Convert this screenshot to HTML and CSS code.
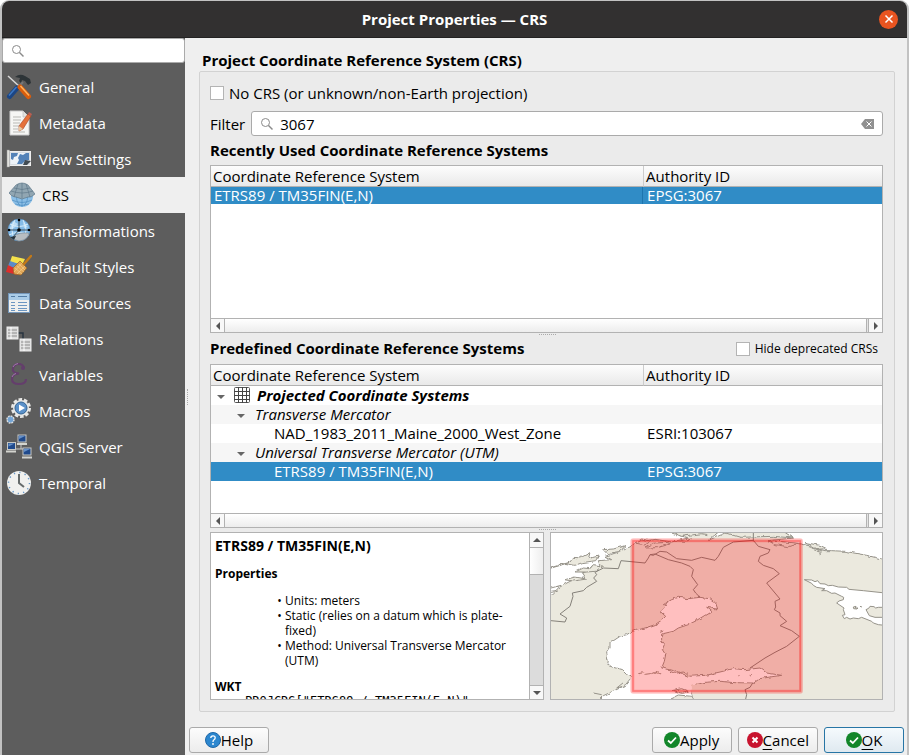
FILE: index.html
```html
<!DOCTYPE html>
<html lang="en">
<head>
<meta charset="utf-8">
<title>Project Properties — CRS</title>
<link rel="stylesheet" href="styles.css">
</head>
<body>
<div class="window">
  <header class="titlebar">
    <h1>Project Properties — CRS</h1>
    <button class="close" aria-label="Close"><svg width="10" height="10" viewBox="0 0 10 10"><path d="M1.500 1.500l7 7M8.500 1.500l-7 7" stroke="#fff" stroke-width="1.500"/></svg></button>
  </header>
  <div class="body">
    <aside class="sidebar">
      <div class="side-search">
        <svg width="14" height="14" viewBox="0 0 14 14" fill="none" stroke="#8a8a8a"><circle cx="5.500" cy="5.500" r="4"/><path d="M8.500 8.500l4 4" stroke-width="1.500"/></svg>
        <input type="text" aria-label="Search options">
      </div>
      <nav>
        <a href="#general"><svg class="icon" viewBox="0 0 26 26"><path d="M2 2l12 11" stroke="#d8d8d8" stroke-width="1.500"/><path d="M9 3q5-4 10-1l5 3 1 4-3 2-3-4-3-1-1 3-2-2 1-3z" fill="#2d3437"/><path d="M17 8L11 15" stroke="#777" stroke-width="2"/><path d="M11 14L3.500 22.500" stroke="#1c4685" stroke-width="5" stroke-linecap="round"/><path d="M10.500 13L3 21.500" stroke="#3d78c4" stroke-width="1.500"/><path d="M14 13l8.500 9.500" stroke="#d95d0c" stroke-width="5" stroke-linecap="round"/><path d="M14.500 12l8.500 9.500" stroke="#ffb35c" stroke-width="1.500"/></svg>General</a>
        <a href="#metadata"><svg class="icon" viewBox="0 0 26 26"><path d="M4 1h13l6 6v18H4z" fill="#f6f6f4" stroke="#ccc"/><path d="M17 1v6h6" fill="#e2e2de" stroke="#bbb" stroke-width=".6"/><path d="M7 7h8M7 10h8M7 13h7M7 16h6M7 19h5M7 22h12" stroke="#b9b9b5"/><path d="M22 4l3 2-8 13-4 2 0-5z" fill="#e5713a" stroke="#a8411e" stroke-width=".6"/><path d="M13 16v5l4-2z" fill="#e7c9a0"/><path d="M22 4l1-2 3 2-1 2z" fill="#b95f54"/></svg>Metadata</a>
        <a href="#view"><svg class="icon" viewBox="0 0 26 26"><rect x="2.500" y="5.500" width="22" height="14" fill="#d8dde2" stroke="#eee"/><rect x="4.500" y="7" width="18.500" height="11" fill="#eef3f8"/><path d="M5 7h7l-1 3-3 1-1 3-2-1zM14 8l3 1 3-2h3v7l-4 1-3 3-5 0 2-4-1-2z" fill="#5382b8"/><path d="M17 19l2-5 6 1-4 4z" fill="#424b52"/><rect x="1" y="4" width="2.500" height="17" fill="#e2e2de" stroke="#999" stroke-width=".5"/></svg>View Settings</a>
        <a href="#crs" class="selected" aria-current="page"><svg class="icon" viewBox="0 0 26 26"><circle cx="13" cy="14" r="11" fill="#8cbfe6"/><path d="M3 18q10 5 20 0M6 22q7 3 14 0M13 11v14M7 12q0 8 4 12M19 12q0 8-4 12" fill="none" stroke="#4f8ec2" stroke-width=".7"/><path d="M7 3q6-4 12 0l7 9q-4 4-7 3l-6 2-6-2-1 0q-4-1-6-4z" fill="#91a6b2" stroke="#60798a" stroke-width=".7"/><path d="M2 9q11 4 22 0M5 6q8 3 16 0M13 1v15M9 2l-4 13M17 2l4 13" fill="none" stroke="#60798a" stroke-width=".7"/></svg>CRS</a>
        <a href="#transformations"><svg class="icon" viewBox="0 0 26 26"><circle cx="13" cy="12" r="11" fill="#85bce8" stroke="#568fc2" stroke-width=".6"/><path d="M7 3l5 3-4 4-5 2zM17 4l5 5-4 1z" fill="#bdddf5"/><path d="M4 6q9 5 18 0M3 17q9-5 20 0M9 2q-6 10 0 20M17 2q6 10 0 20" fill="none" stroke="#d8edfb"/><path d="M13 1v11M2 12h21M13 12l-6 7" stroke="#26333b" stroke-width=".8"/><circle cx="13" cy="12" r="1.800"/><circle cx="13" cy="2" r="1.300"/><circle cx="23" cy="12" r="1.300"/><circle cx="3" cy="12" r="1.300"/><path d="M7 21q1-6 12-6l4 0q-1 7-10 8z" fill="#b8bec2" stroke="#747d82" stroke-width=".5"/><path d="M4 19l6-1-2 4z" fill="#24313a"/></svg>Transformations</a>
        <a href="#styles"><svg class="icon" viewBox="0 0 26 26"><path d="M6 2l13 3-3 6-12-3z" fill="#f4e14b"/><path d="M4 7l12 4-3 5-11-4z" fill="#5b8bc7"/><path d="M2 11l8 4 2 6-12-3z" fill="#dd2e2b"/><path d="M7 14l7-7 7 7-6 7-7-1z" fill="#e0a555" stroke="#9d6420" stroke-width=".7"/><path d="M9 14l7 6M11 12l7 6M13 10l6 6M8 18l8-9M11 20l8-8" stroke="#f4cd8b" stroke-width=".7"/><path d="M18 10l7-8" stroke="#c27918" stroke-width="2.500" stroke-linecap="round"/></svg>Default Styles</a>
        <a href="#sources"><svg class="icon" viewBox="0 0 26 26"><rect x="2.500" y="3.500" width="21" height="19" fill="#f0f0ee" stroke="#7596b8"/><rect x="3" y="4" width="20" height="6" fill="#a9cce8"/><path d="M5 6.500h4M12 6.500h9" stroke="#527ca5"/><path d="M5 12.500h4M12 12.500h9M5 15.500h4M12 15.500h9M5 18.500h4M12 18.500h9M5 20.500h4M12 20.500h9" stroke="#6c96c2"/></svg>Data Sources</a>
        <a href="#relations"><svg class="icon" viewBox="0 0 26 26"><path d="M12 7h5v7" fill="none" stroke="#293440" stroke-width="1.500"/><rect x="1" y="1" width="11" height="12" fill="#ddd" stroke="#eee"/><rect x="14" y="13" width="11" height="12" fill="#ddd" stroke="#eee"/><path d="M2 4h9M2 7h9M2 10h9M15 16h9M15 19h9M15 22h9" stroke="#8c8c8c"/><path d="M5 1v12M18 13v12" stroke="#fff"/></svg>Relations</a>
        <a href="#variables"><svg class="icon" viewBox="0 0 26 26"><path d="M18 6q-1-4-5.500-4T7 6.500t6 5q-7 .5-7 5.500t7 5 7-5" fill="none" stroke="#643e6c" stroke-width="2.200"/><path d="M7 5q1-3 5-3.500M6 15q1-3 4-3.500" stroke="#a179ab" fill="none"/><circle cx="17" cy="6" r="2" fill="#643e6c"/></svg>Variables</a>
        <a href="#macros"><svg class="icon" viewBox="0 0 26 26"><circle cx="15" cy="10" r="8.500" fill="none" stroke="#e8e8e6" stroke-width="3" stroke-dasharray="3.500 1.840"/><circle cx="15" cy="10" r="8" fill="#e8e8e6"/><circle cx="15" cy="10" r="6" fill="#5b91c9" stroke="#316394"/><path d="M13 6.500v7l6-3.500z" fill="#fff"/><circle cx="4.500" cy="21.500" r="3.500" fill="#74a5d5" stroke="#ddd" stroke-width="1.500" stroke-dasharray="1.800 .9"/></svg>Macros</a>
        <a href="#server"><svg class="icon" viewBox="0 0 26 26"><path d="M15 10v5M9 15h10" stroke="#ccc"/><g stroke="#c7c8c4" fill="#204a8c"><rect x="12" y="1" width="8" height="7"/><rect x="1.500" y="8.500" width="8" height="7"/><rect x="17" y="14" width="8" height="7"/></g><path d="M11 10h10M0 17.500h10M16 23.500h10" stroke="#d3d4cf" stroke-width="2"/><path d="M13 2h6l-6 3zM2.500 9.500h6l-6 3zM18 15h6l-6 3z" fill="#6590c8"/></svg>QGIS Server</a>
        <a href="#temporal"><svg class="icon" viewBox="0 0 26 26"><circle cx="13" cy="13" r="12" fill="#f1f1ef"/><circle cx="13" cy="13" r="10.500" fill="none" stroke="#6294c6" stroke-width="1.500" stroke-dasharray="1.200 4.300"/><path d="M13 4v9l5 4" fill="none" stroke="#666b6b" stroke-width="2"/></svg>Temporal</a>
      </nav>
    </aside>
    <div class="side-grip"></div>
    <main>
      <h2>Project Coordinate Reference System (CRS)</h2>
      <section class="group">
        <label class="check"><input type="checkbox">No CRS (or unknown/non-Earth projection)</label>
        <div class="filter">
          <label for="filter">Filter</label>
          <div class="filter-box">
            <svg width="14" height="14" viewBox="0 0 14 14" fill="none" stroke="#8a8a8a"><circle cx="5.500" cy="5.500" r="4"/><path d="M8.500 8.500l4 4" stroke-width="1.500"/></svg>
            <input id="filter" type="text" value="3067">
            <button aria-label="Clear filter"><svg width="13" height="10" viewBox="0 0 13 10"><path d="M4 0h9v10H4L0 5z" fill="#909090"/><path d="M5.500 2.500l5 5M10.500 2.500l-5 5" stroke="#fff"/></svg></button>
          </div>
        </div>
        <h3>Recently Used Coordinate Reference Systems</h3>
        <div class="list recent">
          <table>
            <colgroup><col class="name-col"><col></colgroup>
            <thead><tr><th>Coordinate Reference System</th><th>Authority ID</th></tr></thead>
            <tbody class="short"><tr class="active"><td>ETRS89 / TM35FIN(E,N)</td><td>EPSG:3067</td></tr></tbody>
          </table>
          <div class="hscroll"><i class="left"></i><i class="thumb"></i><i class="right"></i></div>
        </div>
        <div class="split-row">
          <h3>Predefined Coordinate Reference Systems</h3>
          <label class="check small"><input type="checkbox">Hide deprecated CRSs</label>
        </div>
        <div class="list">
          <table class="tree">
            <colgroup><col class="name-col"><col></colgroup>
            <thead><tr><th>Coordinate Reference System</th><th>Authority ID</th></tr></thead>
            <tbody>
              <tr><td class="root"><i class="arrow"></i><svg width="16" height="16" viewBox="0 0 16 16"><rect x=".5" y=".5" width="15" height="15" rx="1" fill="#fff" stroke="#555"/><path d="M4.500 0v16M8.500 0v16M12.500 0v16M0 4.500h16M0 8.500h16M0 12.500h16" stroke="#444"/></svg>Projected Coordinate Systems</td><td></td></tr>
              <tr><td class="branch"><i class="arrow"></i>Transverse Mercator</td><td></td></tr>
              <tr><td class="leaf">NAD_1983_2011_Maine_2000_West_Zone</td><td>ESRI:103067</td></tr>
              <tr><td class="branch"><i class="arrow"></i>Universal Transverse Mercator (UTM)</td><td></td></tr>
              <tr class="active"><td class="leaf">ETRS89 / TM35FIN(E,N)</td><td>EPSG:3067</td></tr>
            </tbody>
          </table>
          <div class="hscroll"><i class="left"></i><i class="thumb"></i><i class="right"></i></div>
        </div>
        <div class="details">
          <div class="info">
            <div class="info-text">
              <h4>ETRS89 / TM35FIN(E,N)</h4>
              <h5>Properties</h5>
              <ul>
                <li>Units: meters</li>
                <li>Static (relies on a datum which is plate-fixed)</li>
                <li>Method: Universal Transverse Mercator (UTM)</li>
              </ul>
              <h5 class="wkt">WKT</h5>
              <pre>PROJCRS["ETRS89 / TM35FIN(E,N)",</pre>
            </div>
            <div class="vscroll"><i class="up"></i><i class="vthumb"></i><i class="down"></i></div>
          </div>
          <svg class="map" viewBox="18 15 993 498" preserveAspectRatio="none" role="img" aria-label="Extent of the selected system">
            <defs><filter id="rough" x="-5%" y="-5%" width="110%" height="110%"><feTurbulence type="fractalNoise" baseFrequency=".06" numOctaves="2" seed="4"/><feDisplacementMap in="SourceGraphic" scale="11" xChannelSelector="R" yChannelSelector="G"/></filter></defs>
            <rect x="18" y="15" width="993" height="498" fill="#ebe9de"/>
            <g fill="#fff" stroke="#96938a" stroke-width="3" stroke-linejoin="round">
              <g filter="url(#rough)">
                <path d="M-20-20H400L395 20 430 30 380 42 330 34 290 40 262 50 235 64 215 74 180 85 200 95 160 98 165 112 140 115 128 130 110 135 120 150 85 155 60 168 40 180 18 203-20 210z"/>
                <path d="M490 37L530 20 548 10 625 8 630 20 720 15 745 30 670 38 770 48 800 55 815 62 840 68 860 68 900 70 965 82 1030 98V-20H560z"/>
                <path d="M262 448L245 440 230 425 205 418 188 412 190 400 185 375 195 360 195 345 225 325 245 320 262 310 300 300 330 290 352 275 362 265 345 250 365 232 355 230 380 215 400 208 430 212 465 208 495 212 512 225 518 243 485 238 500 250 480 262 450 280 430 290 400 300 385 310 350 318 350 340 358 350 352 365 362 380 358 400 350 420 375 425 400 432 430 445 480 442 525 432 565 422 600 425 645 420 665 435 710 442 675 447 645 452 625 465 570 464 525 460 480 463 445 472 440 495 450 530H150L175 503 210 487 245 470z"/>
              </g>
              <path d="M778 155L800 156 810 161 818 158 825 167 840 168 850 173 862 172 880 177 905 178 912 184 955 188 1030 196V293L1000 290 985 285 980 280 950 268 940 272 925 270 915 273 905 268 898 272 892 262 900 260 895 245 897 240 875 225 882 219 895 215 896 208 890 205 870 195 860 196 845 188 830 188 840 182 815 178 805 172 800 166z"/>
              <path d="M963 245l8-4 4-6 12 1 5 4 8-2h20v30h-30l-17-5zM925 237l8-2-2 5 8 0-3 3-10-1zM945 235l6 2" fill="#ebe9de"/>
              <g fill="#ebe9de" filter="url(#rough)">
                <path d="M10 122l30-8 35-12 10-14 20 2 30-16-5 18 30-8-8 14-40 6-22 8-30-6-20 6z"/>
                <path d="M90 132l25-12 20 2 10-12 28 4-22 16-26 2zM60 155l30-8 35 6-40 6zM175 65l30-2 35-10-20 18-34 6z"/>
                <path d="M380 15l30 10 60-8 20 3M385 487l25-5 20 8-20 6zM375 513l25-12 40 4 10 20h-70z"/>
                <path d="M440 470l50-4 80 2 55-1-24 18 5 15-4 30H450l-8-30z" stroke="none"/>
                <path d="M525 10l60 18 100-3 60 5-30-20z"/>
                <path d="M280 437l14-3 10 5 14-2M322 437l10-4 14 5M375 430l15 6 25-4 14 7M345 313l10-4M580 440l4 2M614 442l4 2"/>
                <path d="M670 38l40 3 50 5-30 10-40-6zM780 44l45 8 20 10-30 2zM800 60l30 10-8 12"/>
                <path d="M270 45l20-12 28 6-18 12zM300 60l25-14 35-3 18 4-40 12zM390 38l30 2 20-8"/>
                <path d="M145 495l25 5M235 464l-20 16 25-7M18 180l30-8M18 190l20-3"/>
              </g>
            </g>
            <g fill="none" stroke="#85817a" stroke-width="3" stroke-linejoin="round">
              <path d="M18 278L60 282 65 270 45 258 75 235 84 205 82 195 115 188 125 178 155 160 146 150 155 140 150 133 175 120 220 122 228 98 300 105 310 90 315 80 330 78 370 95 410 105 435 115 445 125 440 145 458 170 445 185 452 195 465 208"/>
              <path d="M315 80L325 82 345 70 365 72 395 92 440 97 470 88 510 97 520 85 535 58 565 42 625 37 640 55 675 65 670 75 645 85 640 100 655 112 685 122 703 137 665 165 705 213 690 220 692 237 688 245 705 255 705 263 725 280 705 293 740 308 763 325 725 355 690 373 660 390 615 420"/>
              <path d="M625 40V15M623 465L615 478 600 485 605 500 602 513"/>
            </g>
            <rect x="262" y="37" width="506" height="454" fill="#f00" fill-opacity=".25"/>
            <g fill="none" stroke="#f00" stroke-opacity=".22"><rect x="262" y="37" width="506" height="454" stroke-width="12" rx="3"/><rect x="263" y="38" width="504" height="452" stroke-width="6"/></g>
          </svg>
        </div>
      </section>
      <footer>
        <button class="btn help"><svg class="bico" viewBox="0 0 16 16"><circle cx="8" cy="8" r="7.500" fill="#2c87cf" stroke="#1d67a8"/><path d="M5.800 6q0-2.200 2.200-2.200t2.200 2q0 1.200-1.200 2T8 10" fill="none" stroke="#fff" stroke-width="1.300"/><circle cx="8" cy="12" r=".9" fill="#fff"/></svg>Help</button>
        <span class="spring"></span>
        <button class="btn"><svg class="bico" viewBox="0 0 16 16"><circle cx="8" cy="8" r="8" fill="#12862a"/><path d="M4 8.500l2.800 2.500L12 5.500" fill="none" stroke="#fff" stroke-width="1.800"/></svg>Apply</button>
        <button class="btn"><svg class="bico" viewBox="0 0 16 16"><circle cx="8" cy="8" r="8" fill="#c8142f"/><path d="M5.500 5.500l5 5M10.500 5.500l-5 5" stroke="#fff" stroke-width="2"/></svg><span><u>C</u>ancel</span></button>
        <button class="btn default"><svg class="bico" viewBox="0 0 16 16"><circle cx="8" cy="8" r="8" fill="#12862a"/><path d="M4 8.500l2.800 2.500L12 5.500" fill="none" stroke="#fff" stroke-width="1.800"/></svg><span><u>O</u>K</span></button>
      </footer>
    </main>
  </div>
</div>
</body>
</html>
```
FILE: styles.css
```css
* { box-sizing: border-box; }
body { margin: 0; background: #fff; font: 15px/18px "Open Sans", sans-serif; color: #000; }
h1, h2, h3, h4, h5, ul, pre { margin: 0; padding: 0; }
button, input { font: inherit; color: inherit; }
i { display: block; }
svg { display: block; flex: none; }

.window { min-height: 100vh; display: flex; flex-direction: column; background: #efefef; border: 1px solid #c2c2c2; border-width: 1px 2px 0; border-radius: 9px 9px 0 0; overflow: hidden; }
.titlebar { height: 37px; flex: none; display: grid; grid-template-columns: 1fr auto 1fr; align-items: center; padding: 0 9px; background: #323030; border-bottom: 1px solid #232222; }
.titlebar h1 { grid-column: 2; font-size: 15px; color: #fff; }
.close { justify-self: end; width: 19px; height: 19px; padding: 0; border: 0; border-radius: 50%; background: #e95420; display: grid; place-items: center; }
.body { flex: 1; display: flex; }

.sidebar { width: 183px; flex: none; background: #5d5d5d; color: #fff; }
.side-search { height: 25px; display: flex; align-items: center; padding-left: 8px; background: #fff; border: 1px solid #aaa; border-radius: 3px; }
.side-search input { flex: 1; min-width: 0; border: 0; background: none; outline: 0; color: #000; }
.sidebar nav { padding-top: 6px; }
.sidebar a { height: 36px; display: flex; align-items: center; gap: 7px; padding-left: 4px; color: #fff; text-decoration: none; }
.sidebar a.selected { background: #efefef; color: #000; padding-left: 7px; }
.icon { width: 26px; height: 26px; }
.side-grip { width: 4px; flex: none; align-self: center; height: 16px; border-left: 1px dotted #aaa; margin-left: 2px; }

main { flex: 1; min-width: 0; display: flex; flex-direction: column; padding: 13px 12px 2px 8px; }
h2, h3 { font-size: 15px; font-weight: bold; }
h2 { padding: 0 3px 1px; line-height: 19px; }
.group { flex: 1; display: flex; flex-direction: column; padding: 10px 11px 11px 10px; border: 1px solid #d2d2d2; border-radius: 2px; background: #ebebeb; }
.check { display: flex; align-items: center; gap: 5px; height: 22px; }
.check input { appearance: none; width: 14px; height: 14px; margin: 0; background: #fff; border: 1px solid #b4b4b4; }
.check.small { font-size: 12px; padding-right: 5px; }
.filter { display: flex; align-items: center; gap: 6px; margin-top: 7px; }
.filter-box { flex: 1; display: flex; align-items: center; height: 25px; padding: 0 8px; background: #fff; border: 1px solid #aaa; border-radius: 3px; }
.filter-box input { flex: 1; min-width: 0; padding: 0; margin-left: 6px; border: 0; outline: 0; }
.filter-box button { padding: 0; border: 0; background: none; }
h3 { line-height: 29px; }

.list { flex: 1 0 164px; display: flex; flex-direction: column; justify-content: space-between; background: #fff; border: 1px solid #b2b2b2; }
.list.recent { flex-basis: 168px; }
table { width: 100%; table-layout: fixed; border-collapse: separate; border-spacing: 0; }
.name-col { width: 64.4%; }
th { height: 21px; padding: 0 2px; line-height: 20px; text-align: left; font-weight: normal; background: linear-gradient(#fdfdfd, #e9e9e9); border-bottom: 1px solid #b2b2b2; }
th + th { border-left: 1px solid #ccc; }
td { height: 19px; padding: 0 4px; line-height: 19px; white-space: nowrap; }
.short td { height: 17px; line-height: 17px; }
.short td:first-child { padding-left: 3px; border-right: 1px solid #1d75ae; }
.tree tr:nth-child(even) td { background: #f6f6f6; }
.tree .root, .tree .branch { font-style: italic; }
.root { font-weight: bold; }
.root, .branch { padding-left: 6px; }
.root .arrow, .root svg, .branch .arrow { display: inline-block; vertical-align: middle; }
.root svg { margin: 1px 7px 0 9px; vertical-align: top; }
.branch { padding-left: 26px; }
.branch .arrow { margin-right: 10px; }
.leaf { padding-left: 63px; }
.arrow { border: 4px solid transparent; border-top-color: #666; border-bottom: 0; }
.list tr.active td { background: #308cc6; color: #fff; }

.hscroll { display: flex; height: 14px; border-top: 1px solid #b2b2b2; background: #e4e4e4; }
.thumb { flex: 1; background: linear-gradient(#fff, #ededed); border: 1px solid #b2b2b2; border-width: 0 1px; margin-right: 1px; }
.left, .right { width: 14px; display: grid; place-items: center; background: #f8f8f8; }
.left { width: 13px; }
.right { border-left: 1px solid #b2b2b2; }
.left::before, .right::before, .up::before, .down::before { content: ""; border: 4px solid transparent; }
.left::before { border-right-color: #555; border-left: 0; }
.right::before { border-left-color: #555; border-right: 0; }
.up::before { border-bottom-color: #555; border-top: 0; }
.down::before { border-top-color: #555; border-bottom: 0; }
.split-row { position: relative; display: flex; justify-content: space-between; align-items: center; height: 31px; }
.split-row::before, .details::before { content: ""; position: absolute; left: 50%; top: 1px; width: 17px; margin-left: -8px; border-top: 1px dotted #aaa; }
.details { position: relative; flex: none; display: grid; grid-template-columns: 334fr 333fr; gap: 6px; padding-top: 4px; }
.info { display: flex; min-height: 0; background: #fff; border: 1px solid #b2b2b2; height: 168px; overflow: hidden; }
.info-text { flex: 1; min-width: 0; padding: 4px 4px 0; font-size: 12px; line-height: 15px; }
.info h4 { font-size: 14px; line-height: 18px; }
.info h5 { font-size: 12px; line-height: 15px; margin-top: 11px; }
.info ul { margin: 12px 0 0 70px; padding-right: 16px; list-style-position: outside; }
.info li::marker { content: "• "; }
.info .wkt { margin-top: 11px; }
pre { margin-left: 30px; font: 12px/15px "DejaVu Sans Mono", monospace; }
.vscroll { width: 14px; flex: none; display: flex; flex-direction: column; background: #dcdcdc; border-left: 1px solid #b2b2b2; }
.up, .down { height: 14px; display: grid; place-items: center; background: #f8f8f8; }
.vthumb { height: 28px; background: linear-gradient(90deg, #fff, #eee); border: 1px solid #b2b2b2; border-width: 1px 0; margin-bottom: auto; }
.down { border-top: 1px solid #b2b2b2; }
.map { width: 100%; height: 168px; border: 1px solid #b2b2b2; background: #fff; }

footer { display: flex; gap: 6px; margin: 15px -9px 0 -10px; }
.spring { flex: 1; }
.btn { display: flex; align-items: center; justify-content: center; min-width: 80px; height: 26px; padding: 0 8px; border: 1px solid #aaa; border-radius: 3px; background: linear-gradient(#fcfcfc, #ececec); }
.btn.default { border-color: #2775a5; background: linear-gradient(#f5fafd, #dfe9f0); }
.btn u { text-underline-offset: 3px; }
.bico { width: 16px; height: 16px; }
```
